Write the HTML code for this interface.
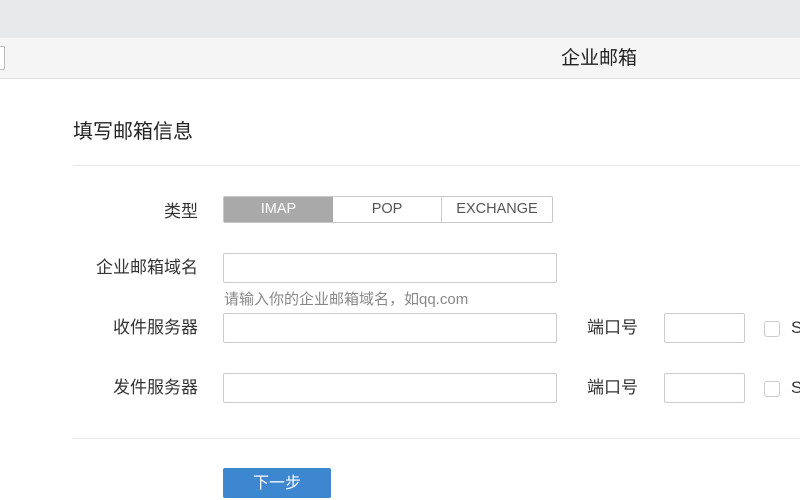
<!DOCTYPE html>
<html><head><meta charset="utf-8"><style>
*{margin:0;padding:0;box-sizing:border-box}
body{width:800px;height:500px;overflow:hidden;background:#fff;font-family:"Liberation Sans","Noto Sans CJK SC",sans-serif;color:#333;position:relative}
.a{position:absolute}
.top{left:0;top:0;width:800px;height:37px;background:#e8e9eb}
.bar{left:0;top:37px;width:800px;height:42px;background:#f5f5f5;border-top:1px solid #ececec;border-bottom:1px solid #e0e0e0}
.lbl{font-size:17px;color:#333;text-align:right;width:160px;left:38px;line-height:20px}
.inp{border:1px solid #ccc;border-radius:2px;background:#fff;height:30px}
.cb{width:16px;height:16px;border:1px solid #ccc;border-radius:3px}
</style></head><body>
<div class="a top"></div>
<div class="a bar"></div>
<div class="a" style="left:-4px;top:46px;width:9px;height:24px;border:1px solid #bbb;border-radius:2px;background:#fff"></div>
<div class="a" style="left:561px;top:48px;font-size:19px;line-height:22px;color:#222">企业邮箱</div>
<div class="a" style="left:73px;top:121px;font-size:20px;line-height:22px;color:#222">填写邮箱信息</div>
<div class="a" style="left:73px;top:165px;width:727px;height:1px;background:#e5e5e5"></div>
<div class="a lbl" style="top:202px">类型</div>
<div class="a" style="left:223px;top:196px;width:330px;height:27px;border:1px solid #c8c8c8;border-radius:2px;display:flex;font-size:14.5px;color:#555">
<div style="width:109px;background:#a9a9a9;color:#fff;text-align:center;line-height:25px">IMAP</div>
<div style="width:109px;border-right:1px solid #ccc;text-align:center;line-height:25px">POP</div>
<div style="flex:1;text-align:center;line-height:25px">EXCHANGE</div></div>
<div class="a lbl" style="top:258px">企业邮箱域名</div>
<div class="a inp" style="left:223px;top:253px;width:334px"></div>
<div class="a" style="left:224px;top:291px;font-size:15px;line-height:18px;color:#888">请输入你的企业邮箱域名，如qq.com</div>
<div class="a lbl" style="top:318px">收件服务器</div>
<div class="a inp" style="left:223px;top:313px;width:334px"></div>
<div class="a" style="left:587px;top:318px;font-size:17px;line-height:20px">端口号</div>
<div class="a inp" style="left:664px;top:313px;width:81px"></div>
<div class="a cb" style="left:764px;top:321px"></div>
<div class="a" style="left:791px;top:318px;font-size:17px;line-height:20px">S</div>
<div class="a lbl" style="top:378px">发件服务器</div>
<div class="a inp" style="left:223px;top:373px;width:334px"></div>
<div class="a" style="left:587px;top:378px;font-size:17px;line-height:20px">端口号</div>
<div class="a inp" style="left:664px;top:373px;width:81px"></div>
<div class="a cb" style="left:764px;top:381px"></div>
<div class="a" style="left:791px;top:378px;font-size:17px;line-height:20px">S</div>
<div class="a" style="left:73px;top:438px;width:727px;height:1px;background:#e8e8e8"></div>
<div class="a" style="left:223px;top:468px;width:108px;height:30px;background:#3d86d0;border-radius:2px;color:#fff;font-size:16px;text-align:center;line-height:31px">下一步</div>
</body></html>
